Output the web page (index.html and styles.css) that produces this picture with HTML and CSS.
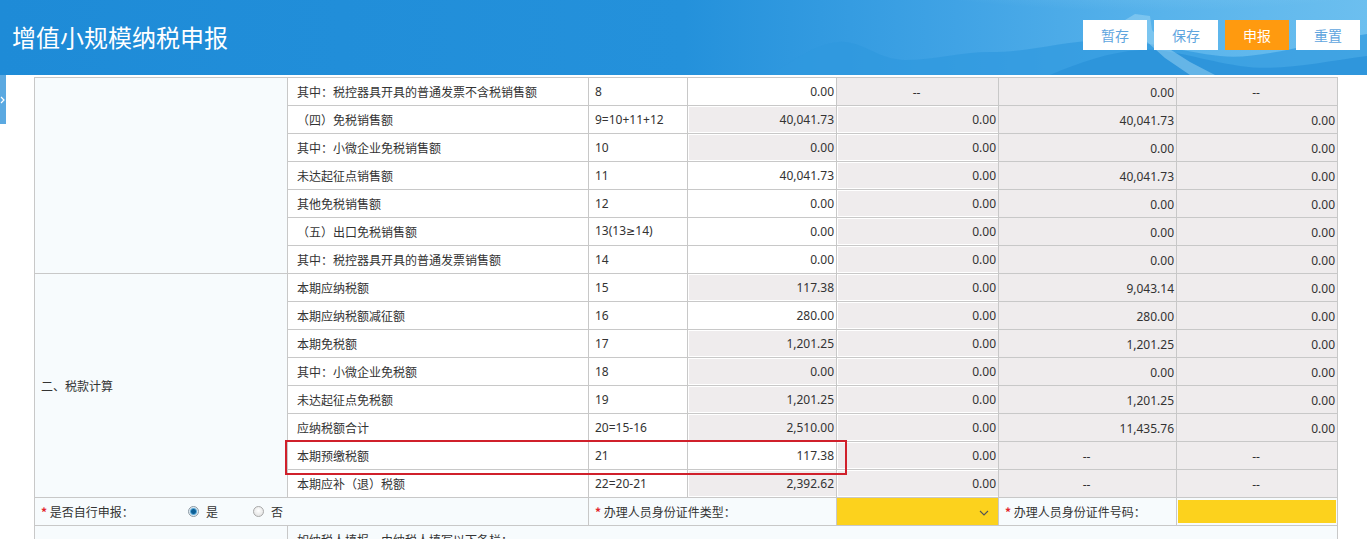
FILE: index.html
```html
<!DOCTYPE html>
<html lang="zh-CN">
<head>
<meta charset="utf-8">
<title>增值小规模纳税申报</title>
<link rel="stylesheet" href="styles.css">
</head>
<body>
<header class="hdr">
  <svg class="hdr-art" viewBox="0 0 1367 75" preserveAspectRatio="none" aria-hidden="true">
    <defs>
      <linearGradient id="sky" x1="0" y1="0" x2="1" y2="0">
        <stop offset="0" stop-color="#1e8bd7"/>
        <stop offset="0.5" stop-color="#2491db"/>
        <stop offset="0.7" stop-color="#40a3e5"/>
        <stop offset="0.85" stop-color="#58b3eb"/>
        <stop offset="1" stop-color="#6cbfef"/>
      </linearGradient>
      <radialGradient id="glow" cx="0.5" cy="0" r="0.6">
        <stop offset="0" stop-color="#a6dcf6" stop-opacity="0.6"/>
        <stop offset="1" stop-color="#a6dcf6" stop-opacity="0"/>
      </radialGradient>
    </defs>
    <rect width="1367" height="75" fill="url(#sky)"/>
    <ellipse cx="1150" cy="0" rx="300" ry="55" fill="url(#glow)"/>
    <path d="M770 75 C795 60 815 44 838 42 C862 40 878 60 905 60 C935 60 960 52 990 52 C1030 52 1060 42 1100 40 C1140 38 1180 52 1220 56 C1260 60 1305 44 1367 34 L1367 75 Z" fill="#2f98de" opacity="0.7"/>
    <path d="M1050 75 C1080 62 1110 52 1140 50 C1170 48 1200 60 1240 66 C1280 72 1320 62 1367 56 L1367 75 Z" fill="#2a92da" opacity="0.8"/>
    <path d="M1125 20 L1135 14 L1150 16 L1152 30 L1168 48 L1190 62 L1215 75 L1190 75 L1165 58 L1145 40 L1130 30 Z" fill="#a9dcf6" opacity="0.45"/>
  </svg>
  <h1 class="title">增值小规模纳税申报</h1>
  <div class="btns">
    <button class="btn">暂存</button>
    <button class="btn">保存</button>
    <button class="btn primary">申报</button>
    <button class="btn">重置</button>
  </div>
</header>

<div class="side-tab"><svg width="6" height="10" viewBox="0 0 6 10"><polyline points="1,2 4,5 1,8" fill="none" stroke="#ffffff" stroke-width="1.2"/></svg></div>

<main class="main">
  <table class="grid">
    <colgroup>
      <col style="width:253px"><col style="width:301px"><col style="width:99px"><col style="width:149px"><col style="width:162px"><col style="width:178px"><col style="width:161px">
    </colgroup>
    <tbody>
      <tr>
        <td class="sec" rowspan="7"></td>
        <td class="name">其中：税控器具开具的普通发票不含税销售额</td><td class="no">8</td>
        <td class="val"><div class="inp">0.00</div></td>
        <td class="ro c">--</td><td class="ro">0.00</td><td class="ro c">--</td>
      </tr>
      <tr>
        <td class="name">（四）免税销售额</td><td class="no">9=10+11+12</td>
        <td class="val"><div class="inp g">40,041.73</div></td>
        <td class="val"><div class="inp g">0.00</div></td><td class="ro">40,041.73</td><td class="ro">0.00</td>
      </tr>
      <tr>
        <td class="name">其中：小微企业免税销售额</td><td class="no">10</td>
        <td class="val"><div class="inp g">0.00</div></td>
        <td class="val"><div class="inp g">0.00</div></td><td class="ro">0.00</td><td class="ro">0.00</td>
      </tr>
      <tr>
        <td class="name">未达起征点销售额</td><td class="no">11</td>
        <td class="val"><div class="inp">40,041.73</div></td>
        <td class="val"><div class="inp g">0.00</div></td><td class="ro">40,041.73</td><td class="ro">0.00</td>
      </tr>
      <tr>
        <td class="name">其他免税销售额</td><td class="no">12</td>
        <td class="val"><div class="inp">0.00</div></td>
        <td class="val"><div class="inp g">0.00</div></td><td class="ro">0.00</td><td class="ro">0.00</td>
      </tr>
      <tr>
        <td class="name">（五）出口免税销售额</td><td class="no">13(13<span class="sym">≥</span>14)</td>
        <td class="val"><div class="inp">0.00</div></td>
        <td class="val"><div class="inp g">0.00</div></td><td class="ro">0.00</td><td class="ro">0.00</td>
      </tr>
      <tr>
        <td class="name">其中：税控器具开具的普通发票销售额</td><td class="no">14</td>
        <td class="val"><div class="inp">0.00</div></td>
        <td class="val"><div class="inp g">0.00</div></td><td class="ro">0.00</td><td class="ro">0.00</td>
      </tr>

      <tr>
        <td class="sec" rowspan="8">二、税款计算</td>
        <td class="name">本期应纳税额</td><td class="no">15</td>
        <td class="val"><div class="inp g">117.38</div></td>
        <td class="val"><div class="inp g">0.00</div></td><td class="ro">9,043.14</td><td class="ro">0.00</td>
      </tr>
      <tr>
        <td class="name">本期应纳税额减征额</td><td class="no">16</td>
        <td class="val"><div class="inp">280.00</div></td>
        <td class="val"><div class="inp g">0.00</div></td><td class="ro">280.00</td><td class="ro">0.00</td>
      </tr>
      <tr>
        <td class="name">本期免税额</td><td class="no">17</td>
        <td class="val"><div class="inp g">1,201.25</div></td>
        <td class="val"><div class="inp g">0.00</div></td><td class="ro">1,201.25</td><td class="ro">0.00</td>
      </tr>
      <tr>
        <td class="name">其中：小微企业免税额</td><td class="no">18</td>
        <td class="val"><div class="inp g">0.00</div></td>
        <td class="val"><div class="inp g">0.00</div></td><td class="ro">0.00</td><td class="ro">0.00</td>
      </tr>
      <tr>
        <td class="name">未达起征点免税额</td><td class="no">19</td>
        <td class="val"><div class="inp g">1,201.25</div></td>
        <td class="val"><div class="inp g">0.00</div></td><td class="ro">1,201.25</td><td class="ro">0.00</td>
      </tr>
      <tr>
        <td class="name">应纳税额合计</td><td class="no">20=15-16</td>
        <td class="val"><div class="inp g">2,510.00</div></td>
        <td class="val"><div class="inp g">0.00</div></td><td class="ro">11,435.76</td><td class="ro">0.00</td>
      </tr>
      <tr>
        <td class="name">本期预缴税额</td><td class="no">21</td>
        <td class="val"><div class="inp">117.38</div></td>
        <td class="val"><div class="inp g">0.00</div></td><td class="ro c">--</td><td class="ro c">--</td>
      </tr>
      <tr>
        <td class="name">本期应补（退）税额</td><td class="no">22=20-21</td>
        <td class="val"><div class="inp g">2,392.62</div></td>
        <td class="val"><div class="inp g">0.00</div></td><td class="ro c">--</td><td class="ro c">--</td>
      </tr>

      <tr class="form-row">
        <td colspan="2" class="lab">
          <div class="self">
            <span class="self-label"><span class="req">*</span> 是否自行申报：</span>
            <span class="radio on"></span><span class="opt">是</span>
            <span class="radio off"></span><span class="opt">否</span>
          </div>
        </td>
        <td colspan="2" class="lab"><span class="req">*</span> 办理人员身份证件类型：</td>
        <td class="sel"><div class="select"><svg width="10" height="6" viewBox="0 0 10 6"><polyline points="1,1 5,5 9,1" fill="none" stroke="#555" stroke-width="1.1"/></svg></div></td>
        <td class="lab"><span class="req">*</span> 办理人员身份证件号码：</td>
        <td class="yin"><div class="yinput"></div></td>
      </tr>
      <tr class="note-row">
        <td class="sec"></td>
        <td colspan="6" class="note">如纳税人填报，由纳税人填写以下各栏：</td>
      </tr>
    </tbody>
  </table>
  <div class="mark"></div>
</main>
</body>
</html>
```

FILE: styles.css
```css
html, body {
  margin: 0;
  padding: 0;
  background: #ffffff;
}
body {
  font-family: "Noto Sans", "Noto Sans CJK SC", sans-serif;
  font-size: 12px;
  color: #333333;
  overflow: hidden;
}

.hdr {
  position: relative;
  height: 75px;
  display: flex;
  align-items: center;
  justify-content: space-between;
  padding: 0 7px 0 12px;
  overflow: hidden;
}
.hdr-art {
  position: absolute;
  left: 0;
  top: 0;
  width: 100%;
  height: 100%;
  z-index: 0;
}
.title {
  position: relative;
  z-index: 1;
  margin: 0 0 2px 0;
  color: #ffffff;
  font-size: 24px;
  font-weight: normal;
  font-family: "Noto Sans CJK SC", sans-serif;
}
.btns {
  position: relative;
  z-index: 1;
  display: flex;
  gap: 7px;
  margin-bottom: 5px;
}
.btn {
  width: 64px;
  height: 30px;
  border: 0;
  padding: 0;
  background: #ffffff;
  color: #5fa5de;
  font-size: 14px;
  font-family: "Noto Sans CJK SC", sans-serif;
}
.btn.primary {
  background: #ff9a0f;
  color: #ffffff;
}

.side-tab {
  position: absolute;
  left: 0;
  top: 75px;
  width: 6px;
  height: 49px;
  background: #5ba9e1;
  display: flex;
  align-items: center;
  justify-content: center;
}

.main {
  position: relative;
  padding: 2px 30px 0 34px;
}
.grid {
  width: 1304px;
  border-collapse: collapse;
  table-layout: fixed;
}
.grid td {
  border: 1px solid #c8c8c8;
  height: 25px;
  padding: 0;
  line-height: 16px;
  white-space: nowrap;
  overflow: hidden;
}
.sym {
  font-family: "DejaVu Sans", sans-serif;
  font-size: 11px;
}
.grid td.sec,
.grid td.name,
.grid td.lab,
.grid td.note {
  font-family: "Noto Sans CJK SC", "Noto Sans", sans-serif;
}
.grid td.sec {
  background: #f7fbfd;
  padding-left: 6px;
  vertical-align: middle;
}
.grid td.name {
  padding-left: 9px;
  background: #ffffff;
}
.grid td.no {
  padding-left: 6px;
  background: #ffffff;
}
.grid td.val {
  padding: 1px 0 1px 1px;
  background: #ffffff;
}
.inp {
  height: 25px;
  line-height: 25px;
  text-align: right;
  padding-right: 2px;
  background: #ffffff;
}
.inp.g {
  background: #efeced;
}
.grid td.ro {
  background: #efeced;
  text-align: right;
  padding-right: 2px;
  padding-top: 2px;
}
.grid td.ro.c {
  text-align: center;
}

.form-row td.lab {
  background: #f7fbfd;
  padding-left: 6px;
}
.req {
  color: #e3242b;
  font-weight: bold;
}
.self {
  display: flex;
  align-items: center;
}
.self-label {
  width: 147px;
}
.radio {
  width: 11px;
  height: 11px;
  border-radius: 50%;
  box-sizing: border-box;
  border: 1px solid #a9a9a9;
  background: radial-gradient(circle at 50% 40%, #ffffff 0%, #dcdcdc 100%);
  margin-right: 7px;
}
.radio.on {
  background: radial-gradient(circle, #0d5f96 0 2px, #5aa9d8 3px, #dce9f2 4px, #f4f4f4 5px);
  border-color: #8c9aa5;
}
.opt {
  margin-right: 35px;
}
.grid td.sel {
  background: #fcd21d;
  padding: 0;
}
.select {
  height: 27px;
  display: flex;
  align-items: center;
  justify-content: flex-end;
  padding-right: 9px;
}
.select svg {
  margin-top: 3px;
}
.grid td.yin {
  background: #f7fbfd;
  padding: 1px 1px;
}
.yinput {
  height: 23px;
  background: #fcd21d;
}
.note-row td {
  background: #f7fbfd;
  vertical-align: top;
  padding-top: 6px;
}
.note-row td.note {
  padding-left: 9px;
}
.mark {
  position: absolute;
  left: 285px;
  top: 365px;
  width: 562px;
  height: 35px;
  box-sizing: border-box;
  border: 2px solid #d0202b;
  pointer-events: none;
}
```
